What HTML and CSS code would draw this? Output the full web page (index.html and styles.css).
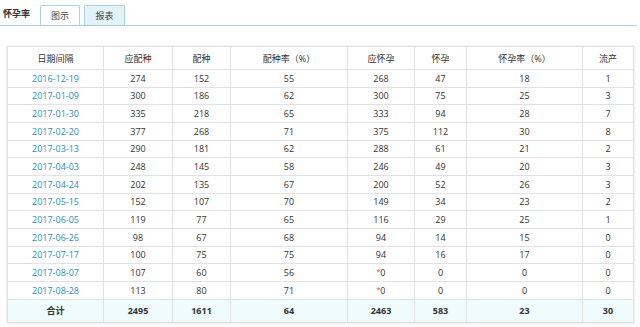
FILE: index.html
```html
<!DOCTYPE html>
<html lang="zh-CN">
<head>
<meta charset="utf-8">
<link rel="stylesheet" href="styles.css">
</head>
<body>
<div class="topbar">
  <div class="title">怀孕率</div>
  <div class="tabs">
    <div class="tab">图示</div>
    <div class="tab active">报表</div>
  </div>
</div>
<div class="wrap">
<table class="report">
  <colgroup>
    <col class="c1"><col class="c2"><col class="c3"><col class="c4"><col class="c5"><col class="c6"><col class="c7"><col class="c8">
  </colgroup>
  <thead>
    <tr><th>日期间隔</th><th>应配种</th><th>配种</th><th>配种率（%）</th><th>应怀孕</th><th>怀孕</th><th>怀孕率（%）</th><th>流产</th></tr>
  </thead>
  <tbody>
    <tr><td class="date">2016-12-19</td><td>274</td><td>152</td><td>55</td><td>268</td><td>47</td><td>18</td><td>1</td></tr>
    <tr><td class="date">2017-01-09</td><td>300</td><td>186</td><td>62</td><td>300</td><td>75</td><td>25</td><td>3</td></tr>
    <tr><td class="date">2017-01-30</td><td>335</td><td>218</td><td>65</td><td>333</td><td>94</td><td>28</td><td>7</td></tr>
    <tr><td class="date">2017-02-20</td><td>377</td><td>268</td><td>71</td><td>375</td><td>112</td><td>30</td><td>8</td></tr>
    <tr><td class="date">2017-03-13</td><td>290</td><td>181</td><td>62</td><td>288</td><td>61</td><td>21</td><td>2</td></tr>
    <tr><td class="date">2017-04-03</td><td>248</td><td>145</td><td>58</td><td>246</td><td>49</td><td>20</td><td>3</td></tr>
    <tr><td class="date">2017-04-24</td><td>202</td><td>135</td><td>67</td><td>200</td><td>52</td><td>26</td><td>3</td></tr>
    <tr><td class="date">2017-05-15</td><td>152</td><td>107</td><td>70</td><td>149</td><td>34</td><td>23</td><td>2</td></tr>
    <tr><td class="date">2017-06-05</td><td>119</td><td>77</td><td>65</td><td>116</td><td>29</td><td>25</td><td>1</td></tr>
    <tr><td class="date">2017-06-26</td><td>98</td><td>67</td><td>68</td><td>94</td><td>14</td><td>15</td><td>0</td></tr>
    <tr><td class="date">2017-07-17</td><td>100</td><td>75</td><td>75</td><td>94</td><td>16</td><td>17</td><td>0</td></tr>
    <tr><td class="date">2017-08-07</td><td>107</td><td>60</td><td>56</td><td><span class="star">*</span>0</td><td>0</td><td>0</td><td>0</td></tr>
    <tr><td class="date">2017-08-28</td><td>113</td><td>80</td><td>71</td><td><span class="star">*</span>0</td><td>0</td><td>0</td><td>0</td></tr>
  </tbody>
  <tfoot>
    <tr><td>合计</td><td>2495</td><td>1611</td><td>64</td><td>2463</td><td>583</td><td>23</td><td>30</td></tr>
  </tfoot>
</table>
</div>
</body>
</html>
```
FILE: styles.css
```css
html, body {
  margin: 0;
  padding: 0;
  background: #ffffff;
}
body {
  font-family: "Open Sans", "Noto Sans", "Noto Sans CJK SC", sans-serif;
  font-size: 9px;
  color: #333333;
  width: 640px;
  height: 327px;
  overflow: hidden;
}
.topbar {
  display: flex;
  align-items: flex-end;
  width: 637px;
  height: 25px;
  border-bottom: 1px solid #a8cde0;
  padding-top: 0;
}
.title {
  font-weight: bold;
  color: #333333;
  padding-left: 3px;
  width: 40px;
  box-sizing: border-box;
  align-self: center;
  padding-top: 2px;
}
.tabs {
  display: flex;
  gap: 4px;
}
.tab {
  width: 40px;
  height: 20px;
  box-sizing: border-box;
  border: 1px solid #a8d3e2;
  border-bottom: none;
  border-radius: 2px 2px 0 0;
  display: flex;
  align-items: center;
  justify-content: center;
  color: #444444;
  background: #ffffff;
}
.tab.active {
  width: 41px;
  background: #e4f2fa;
}
.wrap {
  padding: 20px 0 0 7px;
}
.report {
  width: 626px;
  border-collapse: collapse;
  table-layout: fixed;
  box-shadow: 0 0 2px rgba(0, 0, 0, 0.18);
}
.c1 { width: 96px; }
.c2 { width: 69px; }
.c3 { width: 58px; }
.c4 { width: 117px; }
.c5 { width: 67px; }
.c6 { width: 52px; }
.c7 { width: 116px; }
.c8 { width: 51px; }
.report th, .report td {
  border: 1px solid #e2e2e2;
  text-align: center;
  padding: 0;
  font-weight: normal;
  color: #333333;
}
.report thead th {
  height: 22px;
}
.report tbody td {
  height: 16.67px;
}
.report tfoot td {
  height: 22px;
  background: #effbfd;
  font-weight: bold;
}
.report td.date {
  color: #2a8fc0;
}
.star {
  color: #e0363a;
  font-size: 7px;
  vertical-align: 2px;
}
```
